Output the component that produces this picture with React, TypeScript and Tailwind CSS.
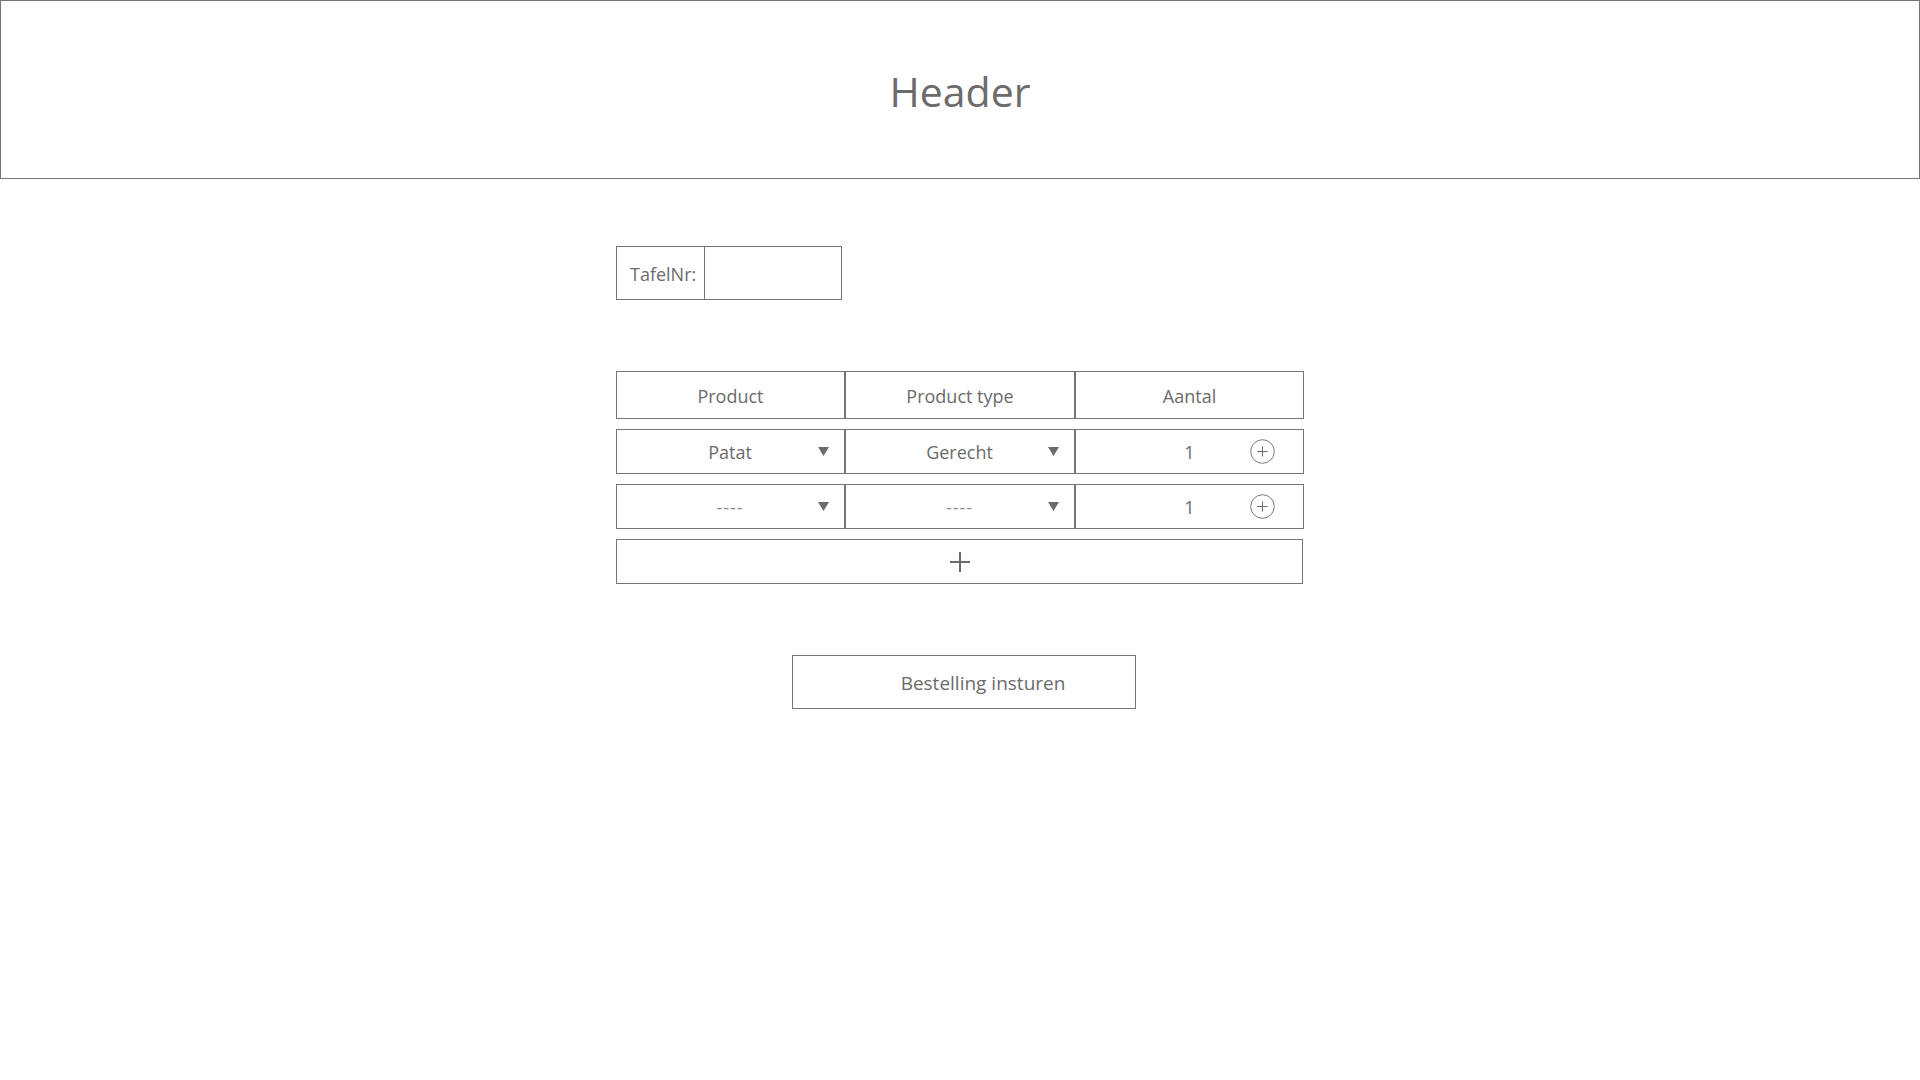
import React from "react";

const font = { fontFamily: '"Open Sans", "Noto Sans", "Liberation Sans", sans-serif' };

const widths = ["w-[229px]", "w-[230px]", "w-[229px]"];

const Arrow: React.FC = () => (
  <svg width="11" height="9" viewBox="0 0 11 9" className="shrink-0">
    <polygon points="0,0 11,0 5.5,9" fill="#6b6b6b" />
  </svg>
);

const PlusCircle: React.FC = () => (
  <svg width="25" height="25" viewBox="0 0 25 25" className="shrink-0">
    <circle cx="12.5" cy="12.5" r="11.8" fill="none" stroke="#7a7a7a" strokeWidth="1" />
    <path d="M12.5 7.5v10M7.5 12.5h10" stroke="#6b6b6b" strokeWidth="1" />
  </svg>
);

const SelectCell: React.FC<{ value: string; empty?: boolean; width: string }> = ({
  value,
  empty,
  width,
}) => (
  <div className={`flex items-center ${width} h-full border border-[#767676] pl-[25px] pr-[15px]`}>
    <div
      className={`flex-1 text-center text-[18px] pt-[2px] ${
        empty ? "text-[#8a8a8a] tracking-[1px]" : "text-[#6b6b6b]"
      }`}
    >
      {value}
    </div>
    <Arrow />
  </div>
);

const AmountCell: React.FC<{ value: number }> = ({ value }) => (
  <div className="flex items-center w-[229px] h-full border border-[#767676] pl-[53px] pr-[28px]">
    <div className="flex-1 text-center text-[18px] pt-[2px] text-[#6b6b6b]">{value}</div>
    <PlusCircle />
  </div>
);

const OrderRow: React.FC<{ product: string; type: string; amount: number; empty?: boolean }> = ({
  product,
  type,
  amount,
  empty,
}) => (
  <div className="flex h-[45px]">
    <SelectCell value={product} empty={empty} width={widths[0]} />
    <SelectCell value={type} empty={empty} width={widths[1]} />
    <AmountCell value={amount} />
  </div>
);

export default function App() {
  return (
    <div className="min-h-screen bg-white text-[#6b6b6b]" style={font}>
      <header className="h-[179px] border border-[#767676] flex items-center justify-center">
        <h1 className="text-[41px] font-normal text-[#6b6b6b] leading-none mt-[4px]">Header</h1>
      </header>

      <main className="w-[688px] mx-auto">
        <div className="mt-[67px] flex h-[54px] w-[226px] border border-[#767676]">
          <label className="flex items-center pl-[13px] pr-[8px] pt-[2px] border-r border-[#767676] text-[18px]">
            TafelNr:
          </label>
          <input className="flex-1 min-w-0 outline-none bg-transparent px-2" />
        </div>

        <div className="mt-[71px] flex flex-col gap-[10px]">
          <div className="flex h-[48px]">
            {["Product", "Product type", "Aantal"].map((h, i) => (
              <div
                key={h}
                className={`${widths[i]} flex items-center justify-center pt-[3px] border border-[#767676] text-[18px]`}
              >
                {h}
              </div>
            ))}
          </div>
          <OrderRow product="Patat" type="Gerecht" amount={1} />
          <OrderRow product="----" type="----" amount={1} empty />
          <button className="h-[45px] w-[687px] flex items-center justify-center border border-[#767676]">
            <svg width="22" height="22" viewBox="0 0 22 22">
              <path d="M11 1v20M1 11h20" stroke="#6b6b6b" strokeWidth="2" />
            </svg>
          </button>
        </div>

        <button className="mt-[71px] ml-[176px] h-[54px] w-[344px] flex items-center justify-center pl-[38px] pt-[2px] border border-[#767676] text-[19px] text-[#6b6b6b]">
          Bestelling insturen
        </button>
      </main>
    </div>
  );
}
